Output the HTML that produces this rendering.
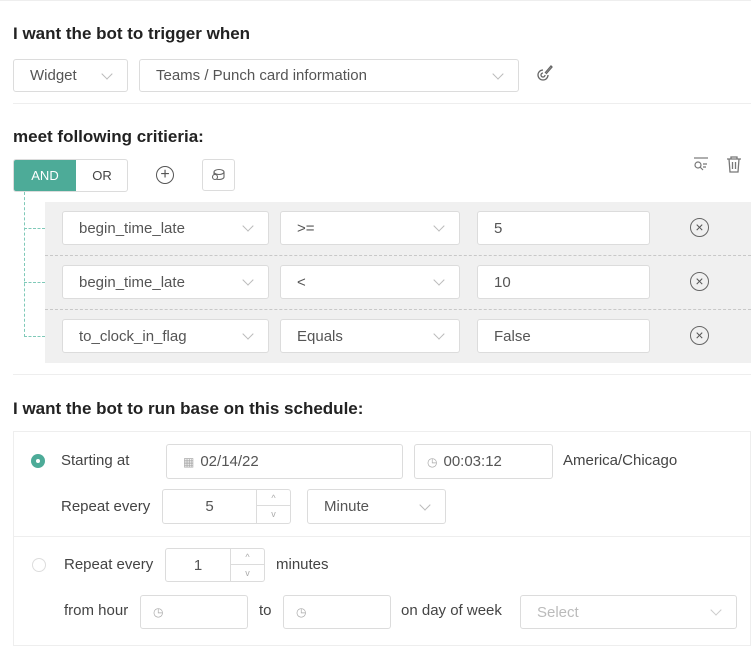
<!DOCTYPE html>
<html><head><meta charset="utf-8"><style>
*{box-sizing:border-box;margin:0;padding:0}
body{width:751px;height:638px;overflow:hidden;background:#fff;font-family:"Liberation Sans",sans-serif;color:#444;position:relative;font-size:15px}
.a{position:absolute}
.t{font-weight:bold;font-size:17px;color:#222}
.box{position:absolute;border:1px solid #dcdcdc;border-radius:3px;background:#fff;font-size:15px;color:#555;display:flex;align-items:center;padding-left:16px}
.chev{position:absolute;right:16px;top:50%;width:8px;height:8px;border-right:1px solid #bbb;border-bottom:1px solid #bbb;transform:translateY(-75%) rotate(45deg)}
.lbl{position:absolute;font-size:15px;color:#444}
.x{position:absolute;width:19px;height:19px;border:1.3px solid #666;border-radius:50%;font-size:14px;line-height:16px;text-align:center;color:#555}
.hl{position:absolute;left:0;width:751px;height:1px;background:#eee}
.ic{color:#aaa;font-size:12px;margin-right:6px}
</style></head><body>
<div class="hl" style="top:0"></div>
<div class="a t" style="left:13px;top:24px">I want the bot to trigger when</div>
<div class="box" style="left:13px;top:59px;width:115px;height:33px">Widget<span class="chev"></span></div>
<div class="box" style="left:139px;top:59px;width:380px;height:33px">Teams / Punch card information<span class="chev"></span></div>
<svg class="a" style="left:535px;top:63px" width="20" height="20" viewBox="0 0 20 20" fill="none" stroke="#666" stroke-width="1.3"><path d="M8 7a5 5 0 1 0 5 5"/><path d="M8 10a2 2 0 1 0 2 2"/><path d="M10 10l6-7 1 1-6 7"/></svg>
<div class="hl" style="top:103px;left:13px;width:738px"></div>
<div class="a t" style="left:13px;top:127px">meet following critieria:</div>
<div class="a" style="left:13px;top:159px;width:115px;height:33px;border:1px solid #dcdcdc;border-radius:3px;overflow:hidden">
<div class="a" style="left:0;top:0;width:62px;height:33px;background:#4dab98;color:#fff;font-size:13px;text-align:center;line-height:31px">AND</div>
<div class="a" style="left:62px;top:0;width:52px;height:33px;color:#444;font-size:13px;text-align:center;line-height:31px">OR</div></div>
<div class="a" style="left:156px;top:166px;width:18px;height:18px;border:1.3px solid #555;border-radius:50%;text-align:center;line-height:15px;font-size:16px;color:#555">+</div>
<div class="a" style="left:202px;top:159px;width:33px;height:32px;border:1px solid #dcdcdc;border-radius:3px"></div>
<svg class="a" style="left:210px;top:167px" width="16" height="16" viewBox="0 0 16 16" fill="none" stroke="#666" stroke-width="1.1"><ellipse cx="9" cy="5" rx="5" ry="2.5"/><path d="M4 5v5c0 1.4 2.2 2.5 5 2.5s5-1.1 5-2.5V5"/><circle cx="5" cy="10" r="2.5" fill="#fff"/></svg>
<svg class="a" style="left:692px;top:156px" width="18" height="18" viewBox="0 0 18 18" fill="none" stroke="#777" stroke-width="1.2"><path d="M2 2h14"/><circle cx="6" cy="9" r="3"/><path d="M8 11l3 3M11 8h4M11 11h3"/></svg>
<svg class="a" style="left:726px;top:155px" width="16" height="19" viewBox="0 0 16 19" fill="none" stroke="#777" stroke-width="1.3"><path d="M1 4h14M5 4V2h6v2M3 4l1 13h8l1-13M6.5 7v7M9.5 7v7"/></svg>
<div class="a" style="left:24px;top:192px;height:145px;border-left:1px dashed #7fc9b8"></div>
<div class="a" style="left:24px;top:228px;width:21px;border-top:1px dashed #7fc9b8"></div>
<div class="a" style="left:24px;top:282px;width:21px;border-top:1px dashed #7fc9b8"></div>
<div class="a" style="left:24px;top:336px;width:21px;border-top:1px dashed #7fc9b8"></div>
<div class="a" style="left:45px;top:202px;width:706px;height:161px;background:#f0f0f0"></div>
<div class="a" style="left:45px;top:255px;width:706px;border-top:1px dashed #c8c8c8"></div>
<div class="a" style="left:45px;top:309px;width:706px;border-top:1px dashed #c8c8c8"></div>
<div class="box" style="left:62px;top:211px;width:207px;height:34px">begin_time_late<span class="chev"></span></div>
<div class="box" style="left:280px;top:211px;width:180px;height:34px">&gt;=<span class="chev"></span></div>
<div class="box" style="left:477px;top:211px;width:173px;height:34px">5</div>
<div class="x" style="left:690px;top:218px">×</div>
<div class="box" style="left:62px;top:265px;width:207px;height:34px">begin_time_late<span class="chev"></span></div>
<div class="box" style="left:280px;top:265px;width:180px;height:34px">&lt;<span class="chev"></span></div>
<div class="box" style="left:477px;top:265px;width:173px;height:34px">10</div>
<div class="x" style="left:690px;top:272px">×</div>
<div class="box" style="left:62px;top:319px;width:207px;height:34px">to_clock_in_flag<span class="chev"></span></div>
<div class="box" style="left:280px;top:319px;width:180px;height:34px">Equals<span class="chev"></span></div>
<div class="box" style="left:477px;top:319px;width:173px;height:34px">False</div>
<div class="x" style="left:690px;top:326px">×</div>
<div class="hl" style="top:374px;left:13px;width:738px"></div>
<div class="a t" style="left:13px;top:399px">I want the bot to run base on this schedule:</div>
<div class="a" style="left:13px;top:431px;width:738px;height:215px;border:1px solid #eee"></div>
<div class="hl" style="top:536px;left:13px;width:738px"></div>
<div class="a" style="left:31px;top:454px;width:14px;height:14px;border-radius:50%;background:#4dab98"><div class="a" style="left:5px;top:5px;width:4px;height:4px;border-radius:50%;background:#fff"></div></div>
<div class="lbl" style="left:61px;top:452px">Starting at</div>
<div class="box" style="left:166px;top:444px;width:237px;height:35px"><span class="ic">▦</span>02/14/22</div>
<div class="box" style="left:414px;top:444px;width:139px;height:35px;padding-left:12px"><span class="ic">◷</span>00:03:12</div>
<div class="lbl" style="left:563px;top:452px">America/Chicago</div>
<div class="lbl" style="left:61px;top:498px">Repeat every</div>
<div class="box" style="left:162px;top:489px;width:129px;height:35px;justify-content:center;padding:0 34px 0 0">5
<div class="a" style="right:0;top:0;width:34px;height:33px;border-left:1px solid #dcdcdc;font-size:9px;color:#aaa;text-align:center"><div style="height:16px;border-bottom:1px solid #dcdcdc;line-height:16px">^</div><div style="line-height:16px">v</div></div></div>
<div class="box" style="left:307px;top:489px;width:139px;height:35px">Minute<span class="chev"></span></div>
<div class="a" style="left:32px;top:558px;width:14px;height:14px;border-radius:50%;border:1px solid #ddd"></div>
<div class="lbl" style="left:64px;top:556px">Repeat every</div>
<div class="box" style="left:165px;top:548px;width:100px;height:34px;justify-content:center;padding:0 34px 0 0">1
<div class="a" style="right:0;top:0;width:34px;height:32px;border-left:1px solid #dcdcdc;font-size:9px;color:#aaa;text-align:center"><div style="height:16px;border-bottom:1px solid #dcdcdc;line-height:16px">^</div><div style="line-height:16px">v</div></div></div>
<div class="lbl" style="left:276px;top:556px">minutes</div>
<div class="lbl" style="left:64px;top:602px">from hour</div>
<div class="box" style="left:140px;top:595px;width:108px;height:34px;padding-left:12px"><span class="ic">◷</span></div>
<div class="lbl" style="left:259px;top:602px">to</div>
<div class="box" style="left:283px;top:595px;width:108px;height:34px;padding-left:12px"><span class="ic">◷</span></div>
<div class="lbl" style="left:401px;top:602px">on day of week</div>
<div class="box" style="left:520px;top:595px;width:217px;height:34px;color:#bbb">Select<span class="chev" style="border-color:#ccc"></span></div>
</body></html>
